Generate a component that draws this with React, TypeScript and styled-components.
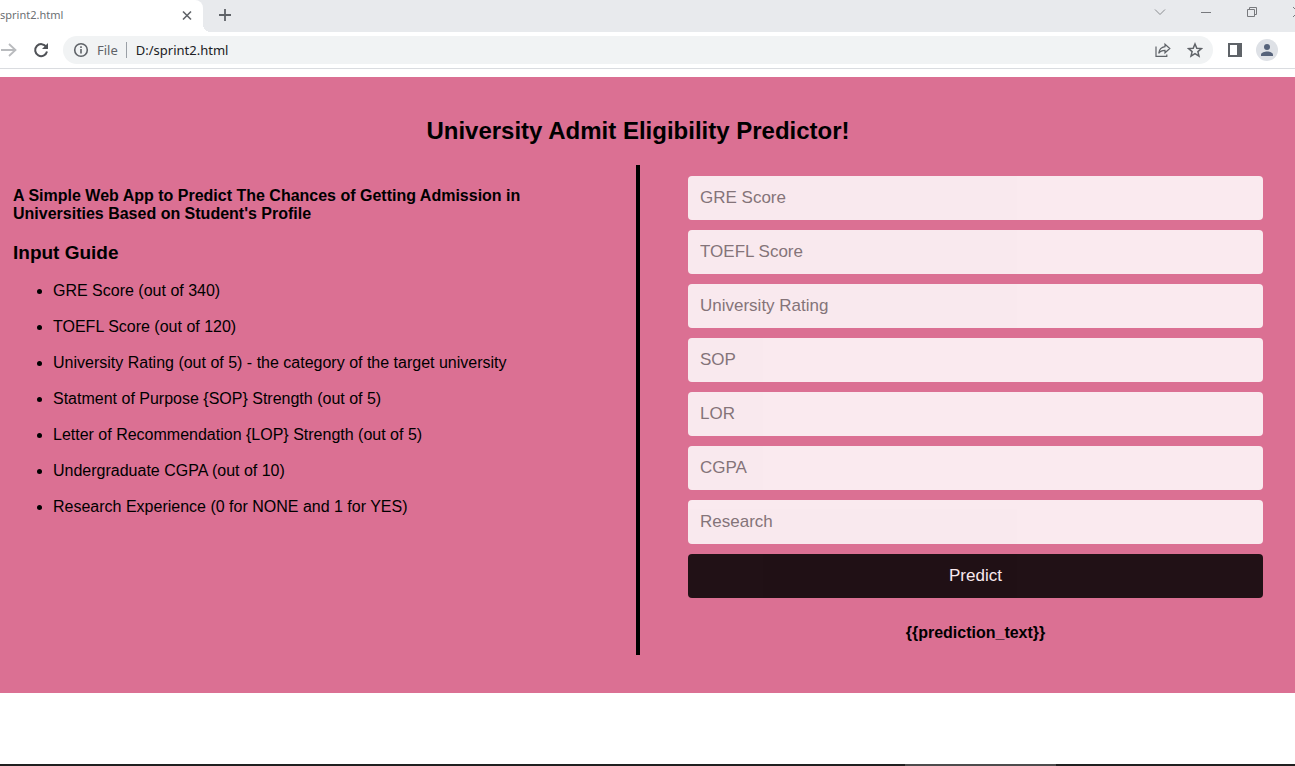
import React from 'react';
import styled, { createGlobalStyle } from 'styled-components';

const GlobalStyle = createGlobalStyle`
  * { box-sizing: border-box; }
  body {
    margin: 0;
    background: #fff;
    overflow-x: hidden;
    font-family: "Liberation Sans", Arial, sans-serif;
  }
`;

const Screen = styled.div`
  display: flex;
  flex-direction: column;
  min-height: 100vh;
`;

const TabStrip = styled.header`
  display: flex;
  height: 32px;
  background: #e8eaed;
  overflow: hidden;
  font-family: "Noto Sans", sans-serif;
`;

const ActiveTab = styled.div`
  position: relative;
  display: flex;
  align-items: center;
  justify-content: space-between;
  width: 203px;
  padding: 0 8px 3px 0;
  background: #fff;
  border-radius: 0 8px 0 0;
  color: #6c6f73;
  font-size: 11px;

  &::after {
    content: '';
    position: absolute;
    left: 100%;
    bottom: 0;
    width: 8px;
    height: 8px;
    background: radial-gradient(circle at 100% 0, #e8eaed 8px, #fff 8px);
  }
`;

const IconButton = styled.button<{ $w?: number }>`
  display: flex;
  align-items: center;
  justify-content: center;
  flex: none;
  width: ${({ $w = 16 }) => $w}px;
  height: 28px;
  padding: 0;
  border: 0;
  background: none;
  color: #5f6368;
`;

const NewTab = styled(IconButton)`
  margin-left: 14px;
`;

const WindowControls = styled.div`
  display: flex;
  height: 24px;
  align-items: center;
  margin-left: auto;
  margin-right: -26px;
`;

const Toolbar = styled.nav`
  display: flex;
  align-items: center;
  height: 37px;
  padding-right: 17px;
  border-bottom: 1px solid #dadce0;
  background: #fff;
  font-family: "Noto Sans", sans-serif;
`;

const AddressBar = styled.div`
  display: flex;
  align-items: center;
  flex: 1;
  min-width: 0;
  height: 28px;
  padding: 0 10px;
  border-radius: 14px;
  background: #f1f3f4;
  font-size: 13px;
`;

const Scheme = styled.span`
  margin-left: 8px;
  padding-right: 8px;
  border-right: 1px solid #9aa0a6;
  color: #5f6368;
  line-height: 16px;
`;

const Address = styled.input`
  flex: 1;
  min-width: 0;
  padding: 0 0 0 9px;
  border: 0;
  outline: 0;
  background: none;
  color: #202124;
  font: inherit;
`;

const BarActions = styled.div`
  display: flex;
  gap: 16px;
`;

const Avatar = styled.button`
  display: flex;
  flex: none;
  width: 22px;
  height: 22px;
  padding: 0;
  border: 0;
  border-radius: 50%;
  background: #dee1e6;
`;

const Page = styled.main`
  margin-top: 8px;
  padding: 40px 32px 38px 13px;
  background: #db7093;
  color: #000;
`;

const Title = styled.h1`
  margin: 0 0 21px;
  font-size: 24px;
  line-height: 27px;
  text-align: center;
`;

const Columns = styled.div`
  display: flex;
`;

const Guide = styled.section`
  flex: 1 1 0;
  min-width: 0;
  padding: 22px 48px 0 0;
`;

const Divider = styled.div`
  flex: none;
  width: 4px;
  background: #000;
`;

const Intro = styled.h2`
  margin: 0;
  font-size: 16px;
  line-height: 18px;
`;

const GuideTitle = styled.h3`
  margin: 19px 0 18px;
  font-size: 19px;
  line-height: 22px;
`;

const GuideList = styled.ul`
  display: grid;
  gap: 18px;
  margin: 0;
  padding-left: 40px;
  font-size: 16px;
  line-height: 18px;
`;

const Form = styled.form`
  display: flex;
  flex-direction: column;
  flex: 1 1 0;
  gap: 10px;
  min-width: 0;
  padding: 11px 0 13px 48px;
`;

const Field = styled.input`
  width: 100%;
  height: 44px;
  padding: 0 12px;
  border: 0;
  border-radius: 4px;
  background: #fff;
  opacity: 0.85;
  font-family: inherit;
  font-size: 17px;
  line-height: 20px;

  &::placeholder {
    color: #757575;
    opacity: 1;
  }
`;

const PredictButton = styled.button`
  height: 44px;
  border: 0;
  border-radius: 4px;
  background: #000;
  color: #fff;
  opacity: 0.85;
  font-family: inherit;
  font-size: 17px;
  line-height: 20px;
`;

const Prediction = styled.output`
  margin-top: 16px;
  font-size: 16px;
  font-weight: bold;
  line-height: 18px;
  text-align: center;
`;

const Taskbar = styled.footer`
  display: flex;
  height: 2px;
  margin-top: auto;
  background: #202020;
`;

const TaskbarItem = styled.div`
  width: 151px;
  margin-left: auto;
  margin-right: 239px;
  background: #4e4c4d;
`;

const guide = [
  'GRE Score (out of 340)',
  'TOEFL Score (out of 120)',
  'University Rating (out of 5) - the category of the target university',
  'Statment of Purpose {SOP} Strength (out of 5)',
  'Letter of Recommendation {LOP} Strength (out of 5)',
  'Undergraduate CGPA (out of 10)',
  'Research Experience (0 for NONE and 1 for YES)',
];

const fields = ['GRE Score', 'TOEFL Score', 'University Rating', 'SOP', 'LOR', 'CGPA', 'Research'];

type GlyphProps = { size?: number; stroke?: number; color?: string; children: React.ReactNode };

const Glyph = ({ size = 16, stroke = 1, color = 'currentColor', children }: GlyphProps) => (
  <svg width={size} height={size} viewBox={`0 0 ${size} ${size}`} fill="none" stroke={color} strokeWidth={stroke} aria-hidden="true">
    {children}
  </svg>
);

export default function App() {
  return (
    <Screen>
      <GlobalStyle />
      <TabStrip>
        <ActiveTab>
          <span>sprint2.html</span>
          <IconButton aria-label="Close tab">
            <Glyph stroke={1.6}><path d="M4 4.500l8 8M12 4.500l-8 8" /></Glyph>
          </IconButton>
        </ActiveTab>
        <NewTab aria-label="New tab">
          <Glyph stroke={1.8}><path d="M8 3v12M2 9h12" /></Glyph>
        </NewTab>
        <WindowControls>
          <IconButton $w={46} aria-label="Search tabs">
            <Glyph color="#8a8c90"><path d="M3 5.500l5 5 5-5" /></Glyph>
          </IconButton>
          <IconButton $w={46} aria-label="Minimize">
            <Glyph color="#77797d"><path d="M3 8.500h10" /></Glyph>
          </IconButton>
          <IconButton $w={46} aria-label="Restore">
            <Glyph color="#77797d"><path d="M3.500 5.500h7v7h-7zM5.500 5.500v-2h7v7h-2" /></Glyph>
          </IconButton>
          <IconButton $w={46} aria-label="Close">
            <Glyph color="#77797d"><path d="M3 3l10 10M13 3L3 13" /></Glyph>
          </IconButton>
        </WindowControls>
      </TabStrip>

      <Toolbar>
        <IconButton $w={18} aria-label="Forward">
          <Glyph size={18} stroke={1.8} color="#b9bbbe"><path d="M1 9h14M9 3l6.500 6L9 15" /></Glyph>
        </IconButton>
        <IconButton $w={45} aria-label="Reload">
          <Glyph size={18} stroke={2} color="#4f5257">
            <path d="M14.300 6A6 6 0 1 0 15 10.500" />
            <path d="M16 2v6h-6z" fill="#4f5257" stroke="none" />
          </Glyph>
        </IconButton>
        <AddressBar>
          <Glyph stroke={1.6} color="#5f6368">
            <circle cx="8" cy="8" r="6.300" />
            <path d="M8 7v4.500M8 4.300v1.600" />
          </Glyph>
          <Scheme>File</Scheme>
          <Address aria-label="Address" defaultValue="D:/sprint2.html" />
          <BarActions>
            <IconButton aria-label="Share">
              <Glyph stroke={1.2}>
                <path d="M1 4.500v9.900h10.800V12.500" />
                <path d="M10 2.200l4.800 4.300L10 10.800V8.300C7 8.300 5 9.300 3.700 11.300 4.200 7.500 6.300 5.200 10 4.700z" />
              </Glyph>
            </IconButton>
            <IconButton aria-label="Bookmark">
              <Glyph stroke={1.5}>
                <path d="M8 2l1.800 4.200 4.600.4-3.500 3 1.100 4.500L8 11.700l-4 2.400 1.100-4.500-3.500-3 4.600-.4z" />
              </Glyph>
            </IconButton>
          </BarActions>
        </AddressBar>
        <IconButton $w={43} aria-label="Side panel">
          <Glyph stroke={2}><path d="M2 2h12v12H2z" /><path d="M12 2v12" strokeWidth="4" /></Glyph>
        </IconButton>
        <Avatar aria-label="Profile">
          <Glyph size={22} stroke={0}>
            <circle cx="11" cy="8" r="3" fill="#55627a" />
            <path d="M5 17v-1.500c0-2 4-3 6-3s6 1 6 3V17z" fill="#55627a" />
          </Glyph>
        </Avatar>
      </Toolbar>

      <Page>
        <Title>University Admit Eligibility Predictor!</Title>
        <Columns>
          <Guide>
            <Intro>A Simple Web App to Predict The Chances of Getting Admission in Universities Based on Student's Profile</Intro>
            <GuideTitle>Input Guide</GuideTitle>
            <GuideList>
              {guide.map((line) => <li key={line}>{line}</li>)}
            </GuideList>
          </Guide>
          <Divider />
          <Form onSubmit={(e) => e.preventDefault()}>
            {fields.map((name) => <Field key={name} name={name} placeholder={name} aria-label={name} />)}
            <PredictButton type="submit">Predict</PredictButton>
            <Prediction>{'{{prediction_text}}'}</Prediction>
          </Form>
        </Columns>
      </Page>

      <Taskbar><TaskbarItem /></Taskbar>
    </Screen>
  );
}
